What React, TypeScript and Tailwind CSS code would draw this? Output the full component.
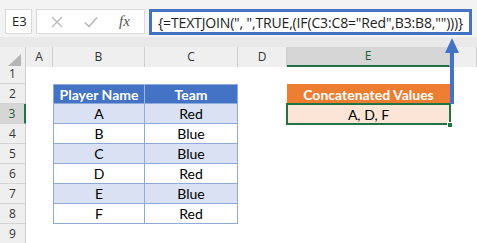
import React from "react";

const players: [string, string][] = [
  ["A", "Red"],
  ["B", "Blue"],
  ["C", "Blue"],
  ["D", "Red"],
  ["E", "Blue"],
  ["F", "Red"],
];

const cols = "grid grid-cols-[26px_27px_92px_93px_49px_163px_1fr]";
const cellFont = "font-['Lato','Liberation_Sans',sans-serif] text-[14px]";

function FormulaBar() {
  return (
    <div className="h-[37px] bg-[#f3f3f3] flex items-start pt-[9px] pl-[5px] gap-[4px]">
      <div className="w-[27px] h-[25px] bg-white border border-[#dadada] flex items-center pl-[6px] text-[13px] text-[#222] font-['Open_Sans',sans-serif]">
        E3
      </div>
      <div className="w-[109px] h-[25px] bg-white border border-[#dadada] flex items-center">
        {/* cancel / enter / insert function */}
        <svg width="12" height="12" viewBox="0 0 12 12" className="ml-[14px]">
          <path d="M1 1 L11 11 M11 1 L1 11" stroke="#b9b9b9" strokeWidth="1.4" fill="none" />
        </svg>
        <svg width="14" height="12" viewBox="0 0 14 12" className="ml-[21px]">
          <path d="M1 6.5 L5 10.5 L13 1.5" stroke="#b9b9b9" strokeWidth="1.6" fill="none" />
        </svg>
        <span className="ml-[21px] italic text-[15px] text-[#555] font-['Liberation_Serif',serif]">fx</span>
      </div>
      <div className="flex-1 mr-[5px] h-[26px] bg-white border-[3px] border-[#4472c4] flex items-center pl-[6px] text-[14px] text-[#222] font-['Open_Sans',sans-serif] tracking-[-0.15px] whitespace-nowrap overflow-hidden">
        {'{=TEXTJOIN(", ",TRUE,(IF(C3:C8="Red",B3:B8,"")))}'}
      </div>
    </div>
  );
}

function ColumnHeaders() {
  const letters = ["A", "B", "C", "D", "E", ""];
  return (
    <div className="bg-[#e9e9e9] pt-[10px]">
      <div className={`${cols} h-[17px] text-[12px] text-[#333] font-['Open_Sans',sans-serif]`}>
        <div className="relative bg-[#efefef] border-r border-[#cfcfcf]">
          <svg width="13" height="12" viewBox="0 0 13 12" className="absolute right-[4px] bottom-[1px]">
            <path d="M13 0 L13 12 L0 12 Z" fill="#b5b5b5" />
          </svg>
        </div>
        {letters.map((l, i) =>
          l === "E" ? (
            <div key={i} className="bg-[#d6d6d6] border-b-2 border-[#217346] border-r border-r-[#cfcfcf] flex items-center justify-center text-[#1f5c38]">
              E
            </div>
          ) : (
            <div key={i} className="bg-[#efefef] border-r border-[#cfcfcf] flex items-center justify-center">
              {l}
            </div>
          )
        )}
      </div>
    </div>
  );
}

function RowHeader({ n }: { n: number }) {
  const active = n === 3;
  return (
    <div
      className={`flex items-center justify-center text-[12px] font-['Open_Sans',sans-serif] border-b border-[#d4d4d4] ${
        active ? "bg-[#d6d6d6] border-r-2 border-r-[#217346] text-[#1f5c38]" : "bg-[#efefef] border-r border-r-[#cfcfcf] text-[#333]"
      }`}
    >
      {n}
    </div>
  );
}

export default function App() {
  return (
    <div className="relative w-[477px] h-[243px] overflow-hidden bg-white">
      <FormulaBar />
      <ColumnHeaders />

      <div className={`${cols} auto-rows-[20px] ${cellFont} text-black`}>
        {/* row 1 */}
        <RowHeader n={1} />
        <div className="col-span-6" />

        {/* row 2: table headers */}
        <RowHeader n={2} />
        <div />
        <div className="bg-[#4472c4] border border-[#8eaadb] border-r-[#9db6e3] flex items-center justify-center font-bold text-white">
          Player Name
        </div>
        <div className="bg-[#4472c4] border-y border-r border-[#8eaadb] flex items-center justify-center font-bold text-white">
          Team
        </div>
        <div />
        <div className="bg-[#ed7d31] flex items-center justify-center font-bold text-white">
          Concatenated Values
        </div>
        <div />

        {/* row 3 to 8 */}
        {players.map(([name, team], i) => {
          const row = i + 3;
          const fill = i % 2 === 0 ? "bg-[#d9e1f2]" : "bg-white";
          return (
            <React.Fragment key={row}>
              <RowHeader n={row} />
              <div />
              <div className={`${fill} border-l border-r border-b border-[#8eaadb] flex items-center justify-center`}>
                {name}
              </div>
              <div className={`${fill} border-r border-b border-[#8eaadb] flex items-center justify-center`}>
                {team}
              </div>
              <div />
              {row === 3 ? (
                <div className="relative bg-[#fce4d6] flex items-center justify-center">
                  A, D, F
                  <div className="absolute -inset-x-[1px] -top-[1px] -bottom-[1px] border-2 border-[#217346]" />
                  <div className="absolute -right-[3px] -bottom-[4px] w-[6px] h-[6px] bg-[#217346] border border-white" />
                </div>
              ) : (
                <div />
              )}
              <div />
            </React.Fragment>
          );
        })}

        {/* row 9 */}
        <RowHeader n={9} />
        <div className="col-span-6" />
      </div>

      {/* pointer from the result cell up to the formula */}
      <svg width="16" height="68" viewBox="0 0 16 68" className="absolute left-[444px] top-[37px]">
        <path d="M8 1 L15 16 L1 16 Z" fill="#4472c4" />
        <rect x="6" y="15" width="4" height="52" fill="#4472c4" />
      </svg>
    </div>
  );
}
